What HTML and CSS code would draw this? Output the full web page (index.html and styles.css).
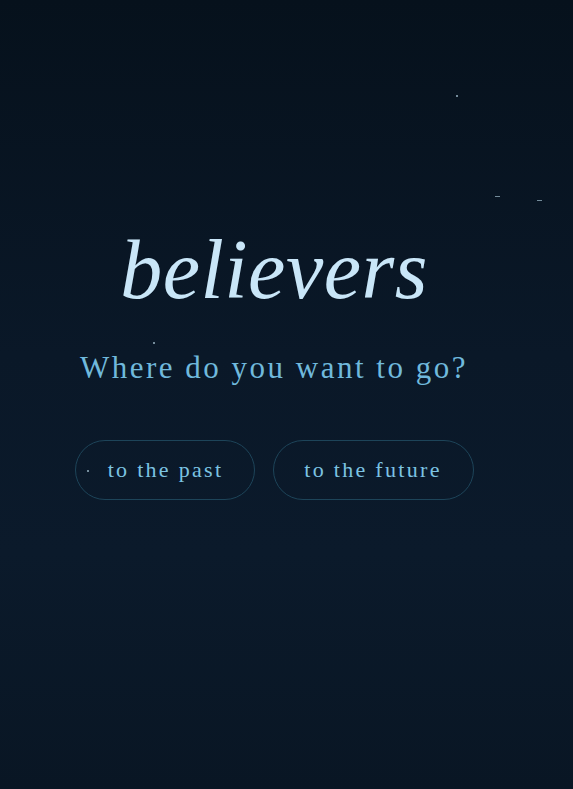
FILE: index.html
```html
<!DOCTYPE html>
<html lang="en">
<head>
    <meta charset="UTF-8">
    <meta name="viewport" content="width=device-width, initial-scale=1.0">
    <title>believers</title>
    <link rel="stylesheet" href="styles.css">
</head>
<body>
    <div class="stars">
        <span class="star" style="left:456px;top:95px"></span>
        <span class="star dash" style="left:495px;top:196px"></span>
        <span class="star dash" style="left:537px;top:200px"></span>
        <span class="star" style="left:153px;top:342px"></span>
        <span class="star" style="left:87px;top:470px"></span>
    </div>
    <main class="container">
        <h1 class="title">believers</h1>
        <p class="question">Where do you want to go?</p>
        <div class="choices">
            <button type="button" class="choice past">to the past</button>
            <button type="button" class="choice future">to the future</button>
        </div>
    </main>
</body>
</html>
```

FILE: styles.css
```css
html, body {
    height: 100%;
}
body {
    margin: 0;
    background: linear-gradient(180deg, #06111c 0%, #0a1828 45%, #0b1a2b 70%, #091624 100%);
    font-family: "Liberation Serif", "DejaVu Serif", serif;
    overflow: hidden;
}
.stars {
    position: absolute;
    inset: 0;
    pointer-events: none;
}
.star {
    position: absolute;
    width: 2px;
    height: 2px;
    background-color: #8fa9b8;
    opacity: 0.8;
}
.star.dash {
    width: 5px;
    height: 1px;
}
.container {
    padding: 228px 25px 0 0;
    display: flex;
    flex-direction: column;
    align-items: center;
}
.title {
    margin: 0;
    font-style: italic;
    font-weight: normal;
    font-size: 84px;
    letter-spacing: 0.5px;
    line-height: 1;
    color: #c9e6f8;
}
.question {
    margin: 38px 0 0;
    font-size: 31px;
    letter-spacing: 2.5px;
    color: #70b9dc;
}
.choices {
    margin-top: 54px;
    display: flex;
    gap: 18px;
}
.choice {
    height: 60px;
    padding: 0 30px;
    border: 1px solid #1d4459;
    border-radius: 30px;
    background: transparent;
    font-family: inherit;
    font-size: 22px;
    letter-spacing: 2.3px;
    color: #7cc3e2;
    cursor: pointer;
}
.choice.past {
    width: 180px;
    padding-left: 32px;
}
.choice.future {
    width: 201px;
}
```
